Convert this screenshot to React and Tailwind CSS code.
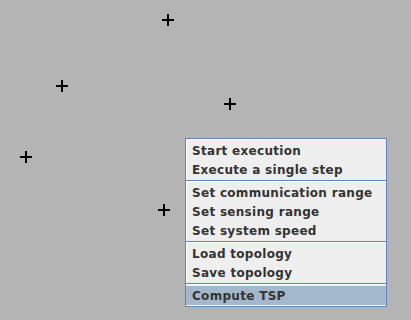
import React from "react";

const crosses = [
  [168, 20],
  [62, 86],
  [230, 104],
  [26, 157],
  [164, 210],
];

function Cross({ x, y }) {
  return (
    <svg
      className="absolute"
      style={{ left: x - 6, top: y - 6 }}
      width="12"
      height="12"
      viewBox="0 0 12 12"
    >
      <rect x="0" y="5" width="12" height="2" fill="#000" />
      <rect x="5" y="0" width="2" height="12" fill="#000" />
    </svg>
  );
}

function Item({ children, selected }) {
  return (
    <div
      className={
        "h-[19px] flex items-center pl-[6px] text-[12px] font-bold tracking-[0.3px] text-[#333333] " +
        (selected ? "bg-[#a3b8cc]" : "")
      }
    >
      {children}
    </div>
  );
}

function Sep() {
  return (
    <div className="h-[4px] flex flex-col">
      <div className="h-[1px]" />
      <div className="h-[1px] bg-[#6382bf]" />
      <div className="h-[1px] bg-white" />
    </div>
  );
}

export default function App() {
  return (
    <div
      className="relative w-[411px] h-[320px] bg-[#b4b4b4] overflow-hidden"
      style={{ fontFamily: '"DejaVu Sans", sans-serif' }}
    >
      {crosses.map(([x, y], i) => (
        <Cross key={i} x={x} y={y} />
      ))}
      <div className="absolute left-[185px] top-[138px] w-[202px] border border-[#6382bf] bg-[#eeeeee] pt-[2px] pb-[1px] shadow-[inset_1px_1px_0_#ffffff,inset_0_-1px_0_#ffffff]">
        <div className="flex flex-col">
          <Item>Start execution</Item>
          <Item>Execute a single step</Item>
          <Sep />
          <Item>Set communication range</Item>
          <Item>Set sensing range</Item>
          <Item>Set system speed</Item>
          <Sep />
          <Item>Load topology</Item>
          <Item>Save topology</Item>
          <Sep />
          <Item selected>Compute TSP</Item>
        </div>
      </div>
    </div>
  );
}
